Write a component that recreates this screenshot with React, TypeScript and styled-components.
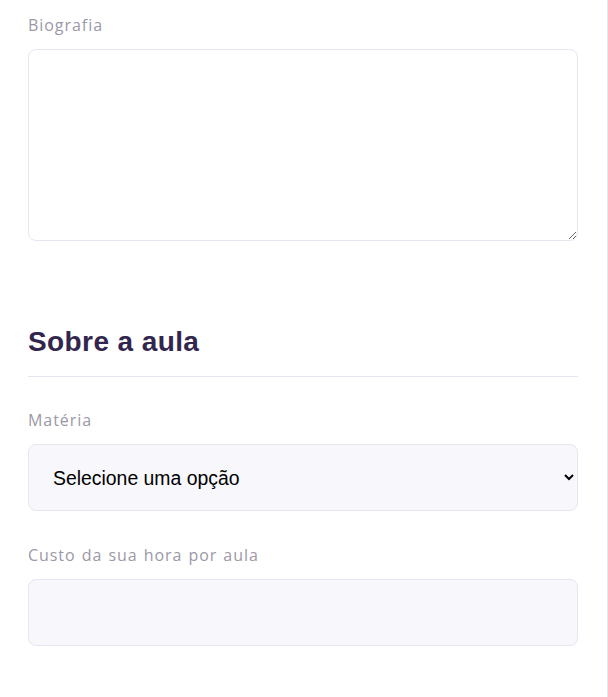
import React from "react";
import styled, { createGlobalStyle } from "styled-components";

const GlobalStyle = createGlobalStyle`
  * { box-sizing: border-box; }
  html, body { margin: 0; padding: 0; background: #ffffff; }
  body { font-family: "Open Sans", "Liberation Sans", sans-serif; }
`;

const Panel = styled.main`
  width: 608px;
  min-height: 697px;
  border-right: 1px solid #e6e6f0;
  padding: 13px 29px 0 28px;
  display: flex;
  flex-direction: column;
`;

const Field = styled.div<{ $top?: number }>`
  display: flex;
  flex-direction: column;
  gap: 12px;
  margin-top: ${(p) => p.$top ?? 0}px;
`;

const Label = styled.label`
  font-family: "Open Sans", "Liberation Sans", sans-serif;
  font-size: 16px;
  line-height: 24px;
  color: #9c98a6;
  letter-spacing: 0.95px;
  word-spacing: 1px;
`;

const TextArea = styled.textarea`
  width: 100%;
  height: 192px;
  border: 1px solid #e6e6f0;
  border-radius: 8px;
  background: #ffffff;
  resize: vertical;
  outline: none;
  padding: 12px 24px;
  font-family: "Liberation Sans", sans-serif;
  font-size: 16px;
  display: block;
`;

const Section = styled.fieldset`
  border: 0;
  padding: 0;
  margin: 84px 0 0 0;
  min-width: 0;
  display: flex;
  flex-direction: column;
`;

const Legend = styled.h2`
  margin: 0;
  padding: 0 0 17px 0;
  border-bottom: 1px solid #e6e6f0;
  font-family: "Liberation Sans", "Arial", sans-serif;
  font-weight: 700;
  font-size: 28px;
  line-height: 34px;
  letter-spacing: 0.4px;
  color: #32264d;
`;

const Select = styled.select`
  width: 100%;
  height: 67px;
  border: 1px solid #e6e6f0;
  border-radius: 8px;
  background: #f8f8fc;
  padding: 0 18px 0 20px;
  font-family: "Liberation Sans", "Arial", sans-serif;
  font-size: 19.4px;
  color: #000000;
  outline: none;
`;

const Input = styled.input`
  width: 100%;
  height: 67px;
  border: 1px solid #e6e6f0;
  border-radius: 8px;
  background: #f8f8fc;
  padding: 0 24px;
  font-family: "Liberation Sans", "Arial", sans-serif;
  font-size: 18px;
  outline: none;
`;

export default function App() {
  return (
    <>
      <GlobalStyle />
      <Panel>
        <Field>
          <Label htmlFor="bio">Biografia</Label>
          <TextArea id="bio" />
        </Field>

        <Section>
          <Legend>Sobre a aula</Legend>
          <Field $top={31}>
            <Label htmlFor="subject">Matéria</Label>
            <Select id="subject" defaultValue="">
              <option value="" disabled>
                Selecione uma opção
              </option>
              <option value="artes">Artes</option>
              <option value="biologia">Biologia</option>
              <option value="matematica">Matemática</option>
            </Select>
          </Field>
          <Field $top={32}>
            <Label htmlFor="cost">Custo da sua hora por aula</Label>
            <Input id="cost" />
          </Field>
        </Section>
      </Panel>
    </>
  );
}
